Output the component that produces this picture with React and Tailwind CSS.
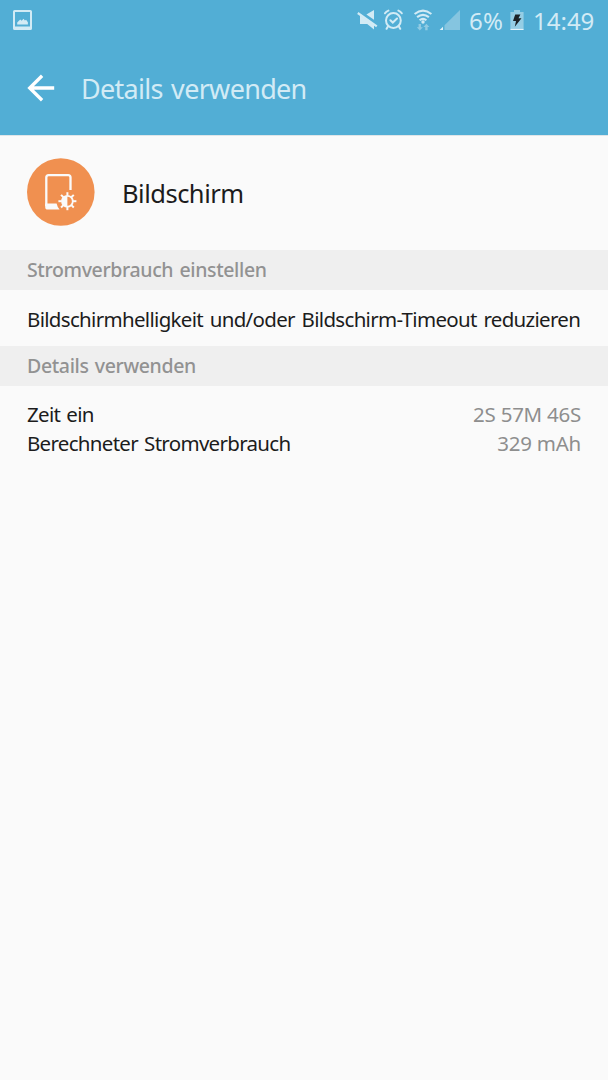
function ScreenshotIcon() {
  return (
    <svg className="h-5 w-[19px]" viewBox="0 0 19 20" fill="#d2ebf5">
      <path
        fillRule="evenodd"
        d="M1.6 0h15.8Q19 0 19 1.6v16.8Q19 20 17.4 20H1.6Q0 20 0 18.4V1.6Q0 0 1.6 0ZM2 2V16.6h15V2Z"
      />
      <path d="M4.2 14.6v-2.2l3-3 1.5 1.4 1.8-2 1.4 1.7 1.2-.8 1.8 2.5v2.4Z" />
    </svg>
  );
}

function MuteIcon() {
  return (
    <svg className="h-[22px] w-[22px]" viewBox="0 0 22 22" fill="#d2ebf5">
      <path d="M18 1v9.8L10.4 5.6ZM4 6.5l14 9v4.9L11.2 15H4Z" />
      <path d="M1.8 4 20.8 17.4" stroke="#d2ebf5" strokeWidth="2.2" />
    </svg>
  );
}

function AlarmIcon() {
  return (
    <svg
      className="h-[22px] w-5"
      viewBox="0 0 20 22"
      fill="none"
      stroke="#d2ebf5"
      strokeWidth="2"
      strokeLinecap="round"
    >
      <circle cx="10.4" cy="11.5" r="7.4" />
      <path d="m7.4 11.2 2.4 2.3 4.2-4M2 4.3Q3.2 2.4 5.4 1.6M18.8 4.3Q17.6 2.4 15.4 1.6M4.9 17.4l-1.3 2.4M15.9 17.4l1.3 2.4" />
    </svg>
  );
}

function WifiIcon() {
  return (
    <svg className="h-[22px] w-5" viewBox="0 0 20 22" fill="none" stroke="#d2ebf5">
      <path d="M1.6 5Q10-1.6 18.4 5M4.1 8.2Q10 3.6 15.9 8.2M6.6 11.2Q10 8.4 13.4 11.2" strokeWidth="2.1" />
      <circle cx="10" cy="13" r="1.7" fill="#d2ebf5" stroke="none" />
      <g fill="#90cbe3" stroke="none">
        <path d="M5.6 15h2.4v3.2h1.8L6.8 21.4 3.8 18.2h1.8Z" />
        <path d="M12.2 21.2h2.4V18h1.8l-3-3.2-3 3.2h1.8Z" />
      </g>
    </svg>
  );
}

function SignalIcon() {
  return (
    <svg className="h-[22px] w-[22px]" viewBox="0 0 22 22">
      <path d="M21 1v20H5.5v-4.8Z" fill="#85c5e0" />
      <path d="M4 17.8V21H.6Z" fill="#e4f3f9" />
    </svg>
  );
}

function BatteryIcon() {
  return (
    <svg className="h-[22px] w-[14px]" viewBox="0 0 14 22">
      <path d="M4 1h6v2h3.6v17H.4V3H4Z" fill="#95cee5" />
      <path d="M.4 19.9h13.2V21H.4Z" fill="#e4f3f9" />
      <path d="M5.2 5.5h5.2L8.5 9.3h3L4.8 17.8l1.2-5.9H3Z" fill="#1d2327" />
    </svg>
  );
}

function BackIcon() {
  return (
    <svg className="h-7 w-7" viewBox="0 0 28 28" fill="none" stroke="#fff" strokeWidth="3.3">
      <path d="M27.2 14H3M15.1 1.8 2.7 14l12.4 12.2" />
    </svg>
  );
}

function DisplayIcon() {
  const rays = [0, 45, 90, 135, 180, 225, 270, 315];
  return (
    <svg className="h-[68px] w-[68px]" viewBox="0 0 68 68">
      <circle cx="33.8" cy="34" r="33.8" fill="#f09050" />
      <path
        d="M43.5 32V19.6q0-2.4-2.4-2.4H21.7q-2.4 0-2.4 2.4V48"
        fill="none"
        stroke="#fafafa"
        strokeWidth="2.3"
      />
      <path d="M18.2 45.6h11.4q.6 3.2 3 6H20.8q-2.6 0-2.6-2.6Z" fill="#fafafa" />
      <g transform="translate(40.4 43.2)">
        {rays.map((deg) => (
          <path key={deg} d="M0-5.6V-9" transform={`rotate(${deg})`} stroke="#fafafa" strokeWidth="2" />
        ))}
        <circle r="5.4" fill="none" stroke="#fafafa" strokeWidth="1.8" />
        <path d="M0-5.5a5.5 5.5 0 0 0 0 11Z" fill="#fafafa" />
      </g>
    </svg>
  );
}

function StatusBar() {
  return (
    <div className="flex h-[41px] items-center pr-[15px] pl-[13px] text-[24px] text-[#d2ebf5]">
      <div className="-mt-px"><ScreenshotIcon /></div>
      <div className="-mt-px ml-auto flex items-center">
        <MuteIcon />
        <div className="ml-[5px]"><AlarmIcon /></div>
        <div className="ml-[10px]"><WifiIcon /></div>
        <div className="ml-[6px]"><SignalIcon /></div>
        <span className="ml-[8px] w-[36px] pt-px tracking-[0.3px] whitespace-nowrap">6%</span>
        <div className="ml-[5px]"><BatteryIcon /></div>
        <span className="ml-[9px] w-[60px] pt-px whitespace-nowrap">14:49</span>
      </div>
    </div>
  );
}

function SectionHeader({ children }) {
  return (
    <h2 className="flex h-10 items-center bg-[#efefef] px-[27px] text-[19.5px] font-medium tracking-[-0.36px] text-[#929292] [word-spacing:1.5px]">
      {children}
    </h2>
  );
}

function DetailRow({ label, value }) {
  return (
    <div className="flex justify-between leading-[28.5px]">
      <span className="tracking-[-0.7px] [word-spacing:1.5px]">{label}</span>
      <span className="tracking-[-0.25px] text-[#8e8e8e]">{value}</span>
    </div>
  );
}

export default function App() {
  return (
    <div className="min-h-[1080px] w-[608px] bg-[#fafafa] font-['Noto_Sans',sans-serif] text-[20.5px] text-[#1c1c1c]">
      <header className="h-[135px] bg-[#52aed5]">
        <StatusBar />
        <div className="flex h-[94px] items-center pl-[27px]">
          <BackIcon />
          <h1 className="ml-[26px] pt-[2px] text-[27px] tracking-[-0.7px] text-[#d2ebf5] [word-spacing:2px]">
            Details verwenden
          </h1>
        </div>
      </header>
      <div className="flex h-[115px] items-center border-t border-[#dfe5e8] pl-[27px]">
        <div className="-mt-[2px]"><DisplayIcon /></div>
        <span className="ml-[27px] text-[25.5px] tracking-[-0.5px]">Bildschirm</span>
      </div>
      <SectionHeader>Stromverbrauch einstellen</SectionHeader>
      <p className="flex h-[56px] items-center px-[27px] pt-[3px] tracking-[-0.68px] whitespace-nowrap [word-spacing:2px]">
        Bildschirmhelligkeit und/oder Bildschirm-Timeout reduzieren
      </p>
      <SectionHeader>Details verwenden</SectionHeader>
      <div className="px-[27px] pt-[14px]">
        <DetailRow label="Zeit ein" value="2S 57M 46S" />
        <DetailRow label="Berechneter Stromverbrauch" value="329 mAh" />
      </div>
    </div>
  );
}
